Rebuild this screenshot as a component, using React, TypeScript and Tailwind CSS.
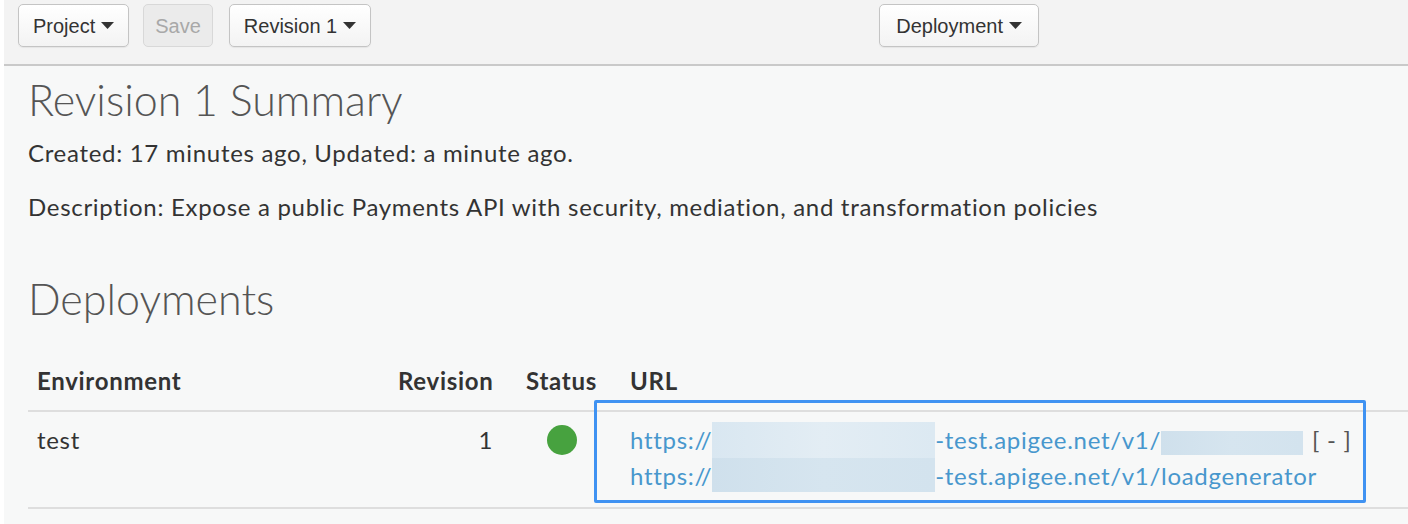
import { ReactNode } from "react";

function Caret() {
  return (
    <svg width="13" height="7" viewBox="0 0 13 7" className="ml-[6px] inline-block">
      <path d="M0 0h13L6.5 7z" fill="#333" />
    </svg>
  );
}

function ToolButton({
  children,
  caret = true,
  disabled = false,
  className = "",
}: {
  children: ReactNode;
  caret?: boolean;
  disabled?: boolean;
  className?: string;
}) {
  return (
    <button
      className={
        "flex h-[43px] items-center rounded-[5px] border text-[20px] " +
        (disabled
          ? "border-[#d8d8d8] bg-[#ebebeb] text-[#a8a8a8] "
          : "border-[#c4c4c4] bg-gradient-to-b from-white to-[#f3f3f3] text-[#333] shadow-[0_1px_1px_rgba(0,0,0,0.06)] ") +
        className
      }
      style={{ fontFamily: '"Liberation Sans", Arial, sans-serif' }}
    >
      {children}
      {caret && <Caret />}
    </button>
  );
}

function Redacted({ w, h, tone, top = false }: { w: number; h: number; tone: "a" | "b"; top?: boolean }) {
  const cls =
    tone === "a"
      ? "bg-gradient-to-r from-[#d9e7f1] via-[#e3edf4] to-[#dce9f2]"
      : "bg-gradient-to-r from-[#cfe0ec] via-[#d6e5ef] to-[#d3e3ee]";
  return (
    <span
      className={"inline-block " + (top ? "align-top " : "align-middle ") + cls}
      style={{ width: w, height: h }}
    />
  );
}

export default function App() {
  return (
    <div
      className="flex h-[524px] w-[1408px] flex-col overflow-hidden border-l-4 border-white bg-[#f7f8f8] text-[#333]"
      style={{ fontFamily: 'Lato, "Open Sans", sans-serif' }}
    >
      {/* toolbar */}
      <div className="flex h-[66px] shrink-0 items-start border-b-2 border-[#c9c9c9] bg-[#f3f3f3] pt-[4px] pl-[14px]">
        <ToolButton className="px-[14px]">Project</ToolButton>
        <ToolButton caret={false} disabled className="ml-[14px] px-[11px]">
          Save
        </ToolButton>
        <ToolButton className="ml-[16px] px-[14px]">Revision 1</ToolButton>
        <ToolButton className="ml-[508px] px-[16px]">Deployment</ToolButton>
      </div>

      <div className="pl-[24px] tracking-[0.7px]">
        <h1 className="mt-[8px] text-[43px] leading-[52px] font-light tracking-normal text-[#555]">
          Revision 1 Summary
        </h1>
        <p className="mt-[12px] text-[24px] leading-[30px]">Created: 17 minutes ago, Updated: a minute ago.</p>
        <p className="mt-[24px] text-[24px] leading-[30px]">
          Description: Expose a public Payments API with security, mediation, and transformation policies
        </p>
        <h2 className="mt-[51px] text-[43px] leading-[52px] font-light tracking-normal text-[#555]">Deployments</h2>

        {/* deployments table */}
        <div className="relative mt-[38px] text-[24px]">
          <div className="grid grid-cols-[361px_113px_119px_1fr] border-b-2 border-[#dedede] font-bold leading-[36px]">
            <div className="px-[9px] pb-[11px]">Environment</div>
            <div className="px-[9px] pb-[11px] text-right">Revision</div>
            <div className="px-[9px] pb-[11px] text-center">Status</div>
            <div className="px-[9px] pb-[11px]">URL</div>
          </div>
          <div className="grid grid-cols-[361px_113px_119px_1fr] border-b-2 border-[#dedede] pt-[10px] pb-[13px] leading-[36px]">
            <div className="px-[9px]">test</div>
            <div className="px-[9px] text-right">1</div>
            <div className="flex h-[36px] items-center justify-center px-[9px]">
              <span className="h-[30px] w-[30px] rounded-full bg-[#47a23f]" />
            </div>
            <div className="px-[9px] whitespace-nowrap text-[#4897cd]">
              <div className="h-[36px]">
                https://
                <Redacted w={223} h={36} tone="a" top />
                -test.apigee.net/v1/
                <Redacted w={142} h={24} tone="b" />
                <span className="ml-[9px] text-[#555]">[ - ]</span>
              </div>
              <div className="h-[36px]">
                https://
                <Redacted w={223} h={34} tone="b" top />
                -test.apigee.net/v1/loadgenerator
              </div>
            </div>
          </div>
          {/* annotation highlight */}
          <div className="pointer-events-none absolute top-[37px] left-[566px] h-[103px] w-[772px] rounded-[2px] border-[3px] border-[#3f92f2]" />
        </div>
      </div>
    </div>
  );
}
